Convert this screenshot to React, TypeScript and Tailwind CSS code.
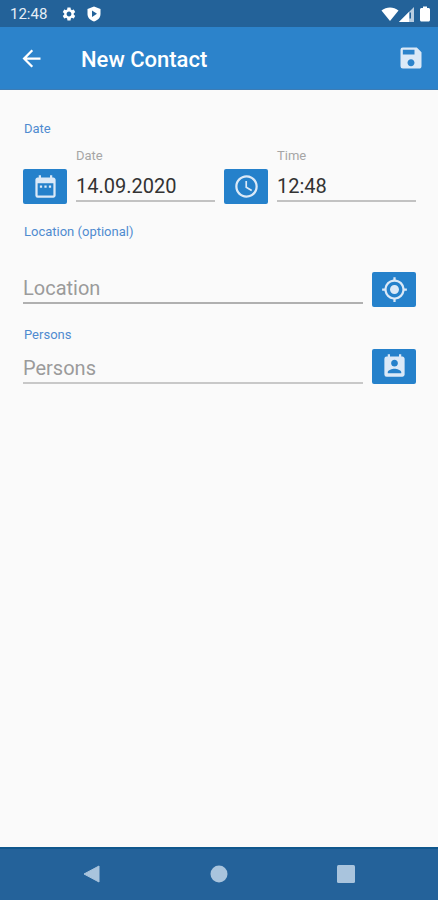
import type { ReactNode } from 'react';
import { useState } from 'react';
import {
  MdArrowBack,
  MdDateRange,
  MdGpsFixed,
  MdPermContactCalendar,
  MdSave,
  MdSchedule,
  MdSettings,
} from 'react-icons/md';

interface IconButtonProps {
  label: string;
  children: ReactNode;
}

function IconButton({ label, children }: IconButtonProps) {
  return (
    <button
      type="button"
      aria-label={label}
      className="flex h-[35px] w-11 shrink-0 items-center justify-center rounded-xs bg-[#2581cb] text-[27px] text-[#dbe9f7]"
    >
      {children}
    </button>
  );
}

const inputClass =
  'block w-full min-w-0 rounded-none bg-transparent text-xl leading-6 text-[#333333] outline-none placeholder:text-[#9b9b9b] placeholder:opacity-100';

function StatusBar() {
  return (
    <div className="flex h-[27px] items-center justify-between bg-[#236299] pt-px pr-2 pl-[10px] text-white">
      <div className="flex items-center">
        <span className="text-[15px] leading-5 text-[#e6eef6]">12:48</span>
        <MdSettings className="ml-[14px] size-4" />
        <svg viewBox="0 0 16 16" className="ml-[9px] size-4" aria-hidden="true">
          <path d="M8 .5 14.500 3v5c0 3.600-2.700 6.300-6.500 7.500C4.200 14.300 1.500 11.600 1.500 8V3z" fill="currentColor" />
          <path d="M6 4.500v6.500L11 7.800z" fill="#236299" />
        </svg>
      </div>
      <div className="flex items-center">
        <svg viewBox="0 0 18 14" className="h-[14px] w-[18px]" aria-hidden="true">
          <path d="M.5 3.500C5.500-.6 12.500-.6 17.500 3.500L9 14z" fill="currentColor" />
        </svg>
        <svg viewBox="0 0 15 15" className="size-[15px]" aria-hidden="true">
          <path d="M0 15 15 0v15z" fill="#b9cde0" />
          <path d="M0 15 10 5v10z" fill="currentColor" />
          <path d="M10.500 5.500h1.500v6h-1.500z" fill="#236299" />
        </svg>
        <svg viewBox="0 0 10 16" className="ml-[6px] h-4 w-[10px]" aria-hidden="true">
          <path d="M3 .5h4V2h1.500C9.300 2 10 2.600 10 3.500v10.500c0 .9-.7 1.500-1.500 1.500h-7C.7 15.500 0 14.900 0 14V3.500C0 2.600.7 2 1.500 2H3z" fill="currentColor" />
        </svg>
      </div>
    </div>
  );
}

function NavigationBar() {
  return (
    <nav className="flex h-[53px] items-center border-t-2 border-[#0f578d] bg-[#24629a] px-[29px] pb-[2px] text-[#a9c4dd]">
      <button type="button" aria-label="Back" className="flex flex-1 justify-center">
        <svg viewBox="0 0 18 18" className="size-[18px]">
          <path d="M1 9 16 1v16z" fill="currentColor" stroke="currentColor" strokeLinejoin="round" />
        </svg>
      </button>
      <button type="button" aria-label="Home" className="flex flex-1 justify-center">
        <svg viewBox="0 0 18 18" className="size-[18px]">
          <circle cx="9" cy="9" r="8.500" fill="currentColor" />
        </svg>
      </button>
      <button type="button" aria-label="Overview" className="flex flex-1 justify-center">
        <svg viewBox="0 0 18 18" className="size-[18px]">
          <rect width="18" height="18" rx="1.500" fill="currentColor" />
        </svg>
      </button>
    </nav>
  );
}

export default function App() {
  const [date, setDate] = useState('14.09.2020');
  const [time, setTime] = useState('12:48');
  const [location, setLocation] = useState('');
  const [persons, setPersons] = useState('');

  return (
    <div className="flex min-h-screen flex-col bg-[#fafafa] font-[Roboto,sans-serif]">
      <StatusBar />
      <header className="flex h-[63px] items-center border-b border-[#3c7cb5] bg-[#2c83cb] pr-[13px] pl-[18px] text-white">
        <button type="button" aria-label="Back" className="text-[27px]">
          <MdArrowBack />
        </button>
        <h1 className="ml-9 flex-1 pt-1 text-[22px] leading-7 font-medium">New Contact</h1>
        <button type="button" aria-label="Save" className="text-[28px] text-[#dbe9f7]">
          <MdSave />
        </button>
      </header>

      <form className="flex-1 pr-[22px] pl-[23px]" onSubmit={(e) => e.preventDefault()}>
        <fieldset className="pt-[31px]">
          <legend className="contents">
            <span className="block pl-px text-[13px] leading-4 text-[#4f8bd0]">Date</span>
          </legend>
          <div className="mt-[11px] flex items-end gap-[9px]">
            <IconButton label="Pick date">
              <MdDateRange />
            </IconButton>
            <div className="min-w-0 flex-1 pb-[2px]">
              <label htmlFor="date" className="block text-[13px] leading-4 text-[#a6a6a6]">
                Date
              </label>
              <div className="mt-[10px] border-b-2 border-[#c2c2c2] pb-[2px]">
                <input id="date" value={date} onChange={(e) => setDate(e.target.value)} className={inputClass} />
              </div>
            </div>
            <IconButton label="Pick time">
              <MdSchedule />
            </IconButton>
            <div className="min-w-0 flex-1 pb-[2px]">
              <label htmlFor="time" className="block text-[13px] leading-4 text-[#a6a6a6]">
                Time
              </label>
              <div className="mt-[10px] border-b-2 border-[#c2c2c2] pb-[2px]">
                <input id="time" value={time} onChange={(e) => setTime(e.target.value)} className={inputClass} />
              </div>
            </div>
          </div>
        </fieldset>

        <div className="mt-5">
          <label htmlFor="location" className="block pl-px text-[13px] leading-4 text-[#4f8bd0]">
            Location (optional)
          </label>
          <div className="mt-8 flex items-end gap-[9px]">
            <div className="mb-[3px] min-w-0 flex-1 border-b-2 border-[#b0b0b0] pb-[2px]">
              <input
                id="location"
                placeholder="Location"
                value={location}
                onChange={(e) => setLocation(e.target.value)}
                className={inputClass}
              />
            </div>
            <IconButton label="Use current location">
              <MdGpsFixed />
            </IconButton>
          </div>
        </div>

        <div className="mt-5">
          <label htmlFor="persons" className="block pl-px text-[13px] leading-4 text-[#4f8bd0]">
            Persons
          </label>
          <div className="mt-[6px] flex items-end gap-[9px]">
            <div className="min-w-0 flex-1 border-b-2 border-[#c8c8c8] pb-[2px]">
              <input
                id="persons"
                placeholder="Persons"
                value={persons}
                onChange={(e) => setPersons(e.target.value)}
                className={inputClass}
              />
            </div>
            <IconButton label="Pick from contacts">
              <MdPermContactCalendar />
            </IconButton>
          </div>
        </div>
      </form>

      <NavigationBar />
    </div>
  );
}
